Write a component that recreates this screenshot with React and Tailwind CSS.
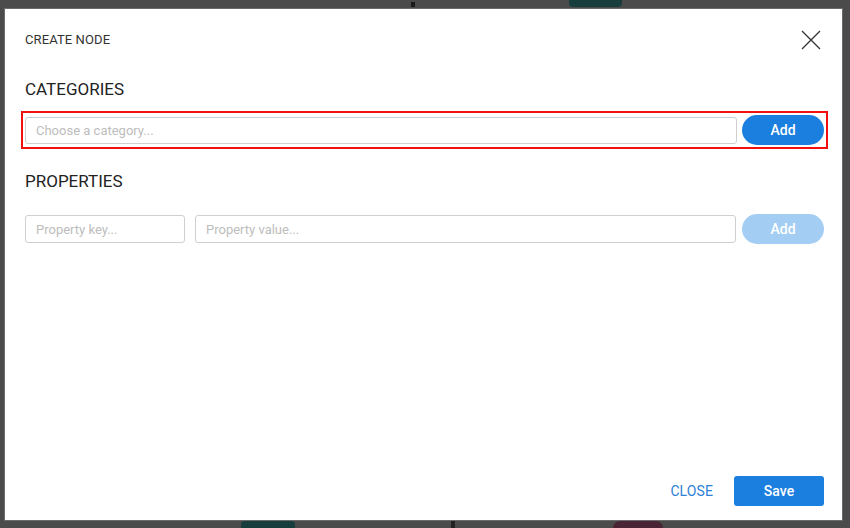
import { useState } from "react";

const font = { fontFamily: "Roboto, 'Noto Sans', sans-serif" };

const CloseIcon = () => (
  <svg width="20" height="20" viewBox="0 0 20 20" fill="none" stroke="#333" strokeWidth="1.3">
    <path d="M1 1 L19 19 M19 1 L1 19" />
  </svg>
);

export default function App() {
  const [category, setCategory] = useState("");
  const [propKey, setPropKey] = useState("");
  const [propValue, setPropValue] = useState("");

  return (
    <div
      className="relative w-[850px] h-[528px] bg-[#4b4b4b] overflow-hidden"
      style={font}
    >
      {/* bits of the page behind the backdrop */}
      <div className="absolute left-[569px] top-0 w-[53px] h-[7px] bg-[#173e3d] rounded-b-sm" />
      <div className="absolute left-[411px] top-[2px] w-[4px] h-[5px] bg-[#1a1a1a]" />
      <div className="absolute left-[241px] bottom-0 w-[54px] h-[7px] bg-[#173e3d] rounded-t-sm" />
      <div className="absolute left-[451px] bottom-0 w-[4px] h-[7px] bg-[#222]" />
      <div className="absolute left-[613px] bottom-0 w-[50px] h-[7px] bg-[#4a2434] rounded-t-lg" />

      {/* modal */}
      <div className="relative ml-[4px] mt-[8px] w-[839px] h-[513px] bg-white border border-[#6b6b6b] flex flex-col pl-4 pr-[14px] pb-[14px]">
        <div className="flex items-center justify-between h-[20px] mt-[21px] pl-1 pr-[7px]">
          <span className="text-[13px] text-[#333] tracking-[0.1px]">CREATE NODE</span>
          <button className="flex items-center justify-center">
            <CloseIcon />
          </button>
        </div>

        <h2 className="mt-[27px] pl-1 text-[17px] leading-[24px] text-[#222]">CATEGORIES</h2>

        <div className="mt-[10px] flex items-center border-2 border-[#f21010] p-[2px] gap-[5px]">
          <input
            className="flex-1 h-[27px] px-[10px] text-[13px] text-[#333] border border-[#cfcfcf] rounded-[3px] outline-none placeholder:text-[#bdbdbd]"
            placeholder="Choose a category..."
            value={category}
            onChange={(e) => setCategory(e.target.value)}
          />
          <button className="w-[82px] h-[30px] rounded-full bg-[#1b7fdf] text-white text-[14px] font-medium">
            Add
          </button>
        </div>

        <h2 className="mt-[20px] pl-1 text-[17px] leading-[24px] text-[#222]">PROPERTIES</h2>

        <div className="mt-[17px] flex items-center border-2 border-transparent p-[2px]">
          <input
            className="w-[160px] h-[28px] px-[10px] text-[13px] text-[#333] border border-[#cfcfcf] rounded-[3px] outline-none placeholder:text-[#bdbdbd]"
            placeholder="Property key..."
            value={propKey}
            onChange={(e) => setPropKey(e.target.value)}
          />
          <input
            className="flex-1 ml-[10px] h-[28px] px-[10px] text-[13px] text-[#333] border border-[#cfcfcf] rounded-[3px] outline-none placeholder:text-[#bdbdbd]"
            placeholder="Property value..."
            value={propValue}
            onChange={(e) => setPropValue(e.target.value)}
          />
          <button
            disabled={!propKey || !propValue}
            className="ml-[6px] w-[82px] h-[30px] rounded-full bg-[#1b7fdf] disabled:bg-[#a3cdf3] text-white text-[14px] font-medium"
          >
            Add
          </button>
        </div>

        <div className="mt-auto flex items-center justify-end gap-[21px] pr-1">
          <button className="text-[14px] text-[#2e7fd6] tracking-[0.1px]">CLOSE</button>
          <button className="w-[90px] h-[30px] rounded-[3px] bg-[#1b7fdf] text-white text-[14px] font-medium">
            Save
          </button>
        </div>
      </div>
    </div>
  );
}
